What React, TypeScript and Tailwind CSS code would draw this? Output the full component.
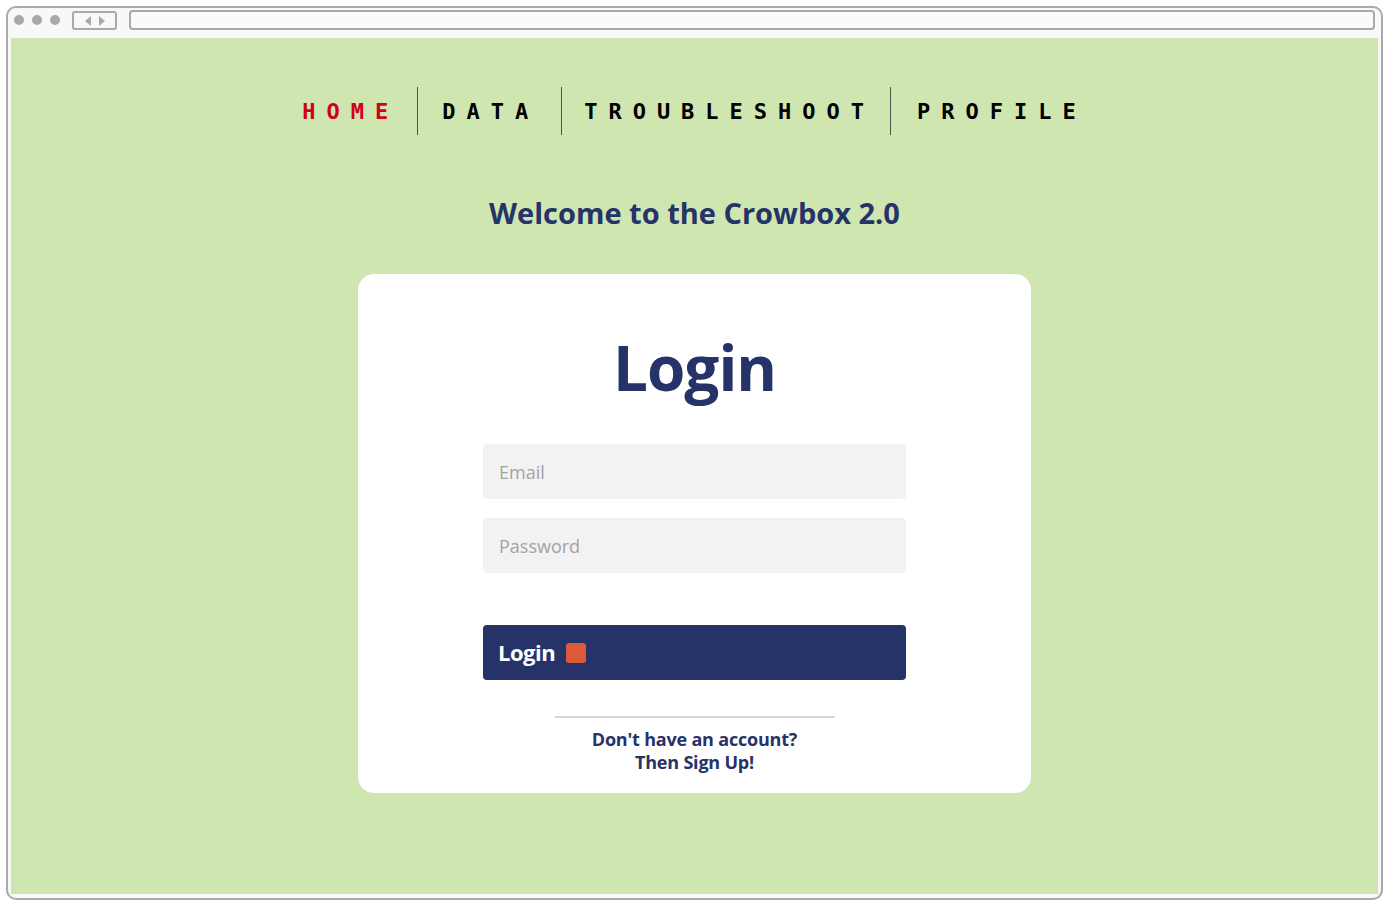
import React from 'react';

const NAV = [
  { label: 'HOME', active: true, pad: 'pl-[22px] pr-[18px]' },
  { label: 'DATA', active: false, pad: 'pl-[24px] pr-[22px]' },
  { label: 'TROUBLESHOOT', active: false, pad: 'pl-[22px] pr-[15px]' },
  { label: 'PROFILE', active: false, pad: 'pl-[26px] pr-[22px]' },
];

// Browser window chrome
const WindowBar: React.FC = () => (
  <div className="flex items-start h-[30px] pt-[2px] pl-[6px] pr-[6px]">
    <div className="flex items-center gap-[8px] mt-[5px]">
      <span className="block w-[10px] h-[10px] rounded-full bg-[#a9a9a9]" />
      <span className="block w-[10px] h-[10px] rounded-full bg-[#a9a9a9]" />
      <span className="block w-[10px] h-[10px] rounded-full bg-[#a9a9a9]" />
    </div>
    <div className="ml-[12px] mt-[1px] flex items-center justify-center gap-[6px] w-[45px] h-[19px] border-2 border-[#a9a9a9] rounded-[3px]">
      <svg width="8" height="10" viewBox="0 0 8 10">
        <polygon points="7,0 7,10 1,5" fill="#a9a9a9" />
      </svg>
      <svg width="8" height="10" viewBox="0 0 8 10">
        <polygon points="1,0 1,10 7,5" fill="#a9a9a9" />
      </svg>
    </div>
    <div className="ml-[12px] flex-1 h-[20px] border-2 border-[#a9a9a9] rounded-[4px] bg-[#fafafa]" />
  </div>
);

const Nav: React.FC = () => (
  <nav className="flex justify-center pt-[49px]">
    {NAV.map((item, i) => (
      <div
        key={item.label}
        className={`flex items-center h-[48px] ${item.pad} ${i > 0 ? 'border-l border-[#4b5548]' : ''}`}
      >
        <span
          className={`text-[22px] font-bold tracking-[11px] leading-none pt-[2px] ${item.active ? 'text-[#d0021b]' : 'text-black'}`}
          style={{ fontFamily: '"DejaVu Sans Mono", "Liberation Mono", monospace' }}
        >
          {item.label}
        </span>
      </div>
    ))}
  </nav>
);

const LoginCard: React.FC = () => (
  <div className="w-[673px] h-[519px] bg-white rounded-[16px] flex flex-col items-center pt-[62px]">
    <h1 className="text-[62px] font-bold leading-none text-[#253369] tracking-[-1px]">Login</h1>
    <div className="w-[423px] mt-[46px] flex flex-col gap-[19px]">
      <input
        type="email"
        placeholder="Email"
        className="w-full h-[55px] bg-[#f2f2f2] rounded-[4px] px-[16px] text-[18px] placeholder-[#a3a3a3] outline-none"
      />
      <input
        type="password"
        placeholder="Password"
        className="w-full h-[55px] bg-[#f2f2f2] rounded-[4px] px-[16px] text-[18px] placeholder-[#a3a3a3] outline-none"
      />
    </div>
    <button className="w-[423px] h-[55px] mt-[52px] bg-[#253369] rounded-[4px] flex items-center px-[15px] gap-[11px]">
      <span className="text-white text-[22px] font-bold tracking-[-0.5px]">Login</span>
      <span className="block w-[20px] h-[20px] rounded-[3px] bg-[#dc5a3a]" />
    </button>
    <div className="w-[280px] h-[2px] bg-[#d4d4d4] mt-[36px]" />
    <p className="mt-[10px] text-center text-[18px] font-bold leading-[23px] text-[#253369] tracking-[-0.2px]">
      Don't have an account?
      <br />
      Then Sign Up!
    </p>
  </div>
);

export default function App() {
  return (
    <div
      className="w-[1389px] h-[906px] bg-white p-[6px]"
      style={{ fontFamily: '"Open Sans", "Noto Sans", sans-serif' }}
    >
      <div className="w-full h-full border-2 border-[#a9a9a9] rounded-[10px] bg-[#f8f8f8] flex flex-col">
        <WindowBar />
        <div className="flex-1 mx-[3px] mb-[4px] bg-[#cfe6b1] flex flex-col items-center">
          <Nav />
          <h2 className="mt-[63px] text-[29px] font-bold text-[#253369] tracking-[0px] leading-none">
            Welcome to the Crowbox 2.0
          </h2>
          <div className="mt-[47px]">
            <LoginCard />
          </div>
        </div>
      </div>
    </div>
  );
}
